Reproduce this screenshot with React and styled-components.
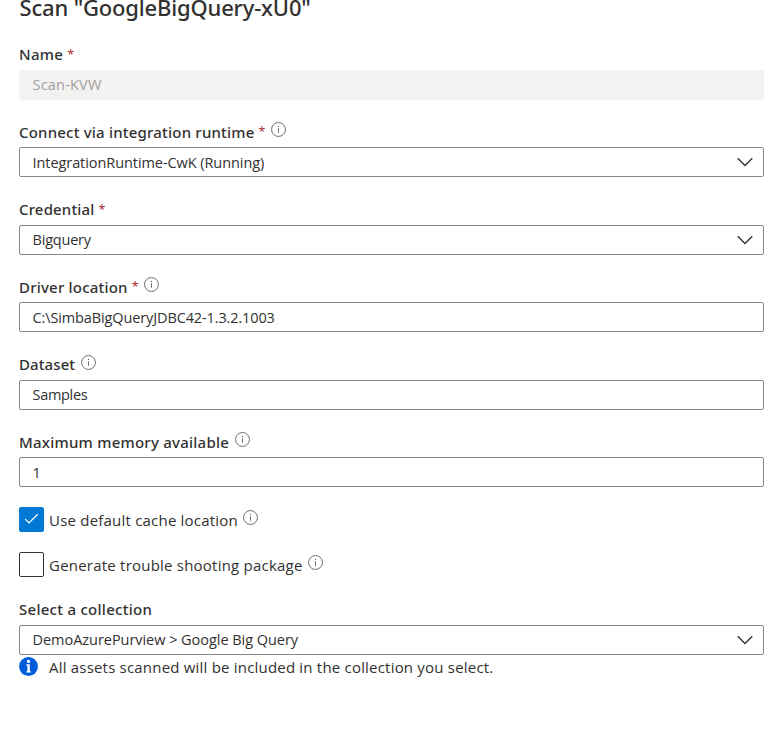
import React from 'react';
import styled, { createGlobalStyle } from 'styled-components';

const GlobalStyle = createGlobalStyle`
  *, *::before, *::after { box-sizing: border-box; }
  body { margin: 0; background: #fff; }
`;

const Panel = styled.main`
  height: 732px;
  padding: 0 19px;
  background: #fff;
  color: #323130;
  font-family: 'Open Sans', 'Noto Sans', sans-serif;
`;

const Title = styled.h1`
  height: 45px;
  margin: 0;
  padding-left: 0.5px;
  font: 500 22px/14px 'Noto Sans', sans-serif;
  letter-spacing: -0.17px;
  white-space: nowrap;
`;

const Fields = styled.div`
  display: flex;
  flex-direction: column;
  gap: 22.7px;
`;

const FieldBlock = styled.section`
  height: 54.8px;
`;

const LabelRow = styled.div`
  display: flex;
  height: 24.8px;
  white-space: nowrap;
`;

const LabelText = styled.label`
  padding-top: 0.3px;
  font: 500 15px/18px 'Noto Sans', sans-serif;
  letter-spacing: ${({ $spacing }) => $spacing}px;
`;

const Required = styled.span`
  margin-left: 4px;
  padding-top: 1px;
  color: #a4262c;
  font: 400 12.5px/18px 'Open Sans', sans-serif;
`;

const InfoSvg = styled.svg`
  flex: none;
  width: 15px;
  height: 15px;
  margin: ${({ $top }) => $top}px 0 0 ${({ $left }) => $left}px;
`;

const Control = styled.div`
  display: flex;
  align-items: center;
  justify-content: space-between;
  height: 30px;
  padding: 0 10px 0 ${({ $disabled }) => ($disabled ? 13.5 : 12.5)}px;
  border: ${({ $disabled }) => ($disabled ? '0' : '1px solid #8a8886')};
  border-radius: 2px;
  background: ${({ $disabled }) => ($disabled ? '#f3f2f1' : '#fff')};
  color: ${({ $disabled }) => ($disabled ? '#a19f9d' : '#323130')};
`;

const Value = styled.span`
  padding-top: 1px;
  font-size: 14.5px;
  line-height: 20px;
  letter-spacing: ${({ $spacing }) => $spacing}px;
  white-space: nowrap;
`;

const CheckRow = styled.div`
  display: flex;
  height: 45px;
`;

const CheckBox = styled.span`
  display: grid;
  place-items: center;
  width: 25px;
  height: 25px;
  border: 1px solid ${({ $checked }) => ($checked ? '#0078d4' : '#323130')};
  border-radius: 2px;
  background: ${({ $checked }) => ($checked ? '#0078d4' : '#fff')};
`;

const BodyText = styled.span`
  margin-left: ${({ $left }) => $left}px;
  font-size: 15px;
  line-height: ${({ $line }) => $line}px;
  letter-spacing: ${({ $spacing }) => $spacing}px;
  white-space: nowrap;
`;

const Checks = styled.section`
  padding-top: 19.7px;
`;

const Collection = styled.section`
  padding-top: 3.2px;
`;

const Note = styled.div`
  display: flex;
  padding-top: 2px;
  height: 30px;
`;

const Info = ({ left = 6, top = 0 }) => (
  <InfoSvg $left={left} $top={top} viewBox="0 0 15 15" fill="none" aria-hidden="true">
    <circle cx="7.5" cy="7.5" r="6.95" stroke="#605e5c" strokeWidth="0.9" />
    <path d="M7.5 6.2v4.6" stroke="#605e5c" strokeWidth="0.9" />
    <circle cx="7.5" cy="4.4" r="0.6" fill="#605e5c" />
  </InfoSvg>
);

const Chevron = () => (
  <svg width="16" height="10" viewBox="0 0 16 10" fill="none" aria-hidden="true">
    <path d="M0.7 1.2 8 8.5 15.3 1.2" stroke="#323130" strokeWidth="1.3" />
  </svg>
);

const CheckMark = () => (
  <svg width="15" height="12" viewBox="0 0 15 12" fill="none" aria-hidden="true">
    <path d="M1.2 6.1 5 9.9 13.7 1.2" stroke="#fff" strokeWidth="1.3" />
  </svg>
);

const InfoBadge = () => (
  <svg width="19" height="19" viewBox="0 0 19 19" aria-hidden="true">
    <circle cx="9.5" cy="9.5" r="9.4" fill="#015cda" />
    <circle cx="9.5" cy="4.4" r="1.6" fill="#fff" />
    <path d="M7.3 7.3h3.5v7h1.1v1.3H7.3v-1.3h1.1V8.6H7.3z" fill="#fff" />
  </svg>
);

const Label = ({ text, spacing, required, info, infoLeft }) => (
  <LabelRow>
    <LabelText $spacing={spacing}>{text}</LabelText>
    {required && <Required>*</Required>}
    {info && <Info left={infoLeft} />}
  </LabelRow>
);

const fields = [
  { text: 'Name', spacing: 0.3, required: true, value: 'Scan-KVW', valueSpacing: 0.2, disabled: true },
  { text: 'Connect via integration runtime', spacing: 0.2, required: true, info: true, value: 'IntegrationRuntime-CwK (Running)', valueSpacing: -0.07, select: true },
  { text: 'Credential', spacing: 0.15, required: true, value: 'Bigquery', valueSpacing: -0.2, select: true },
  { text: 'Driver location', spacing: 0.2, required: true, info: true, infoLeft: 5.3, value: 'C:\\SimbaBigQueryJDBC42-1.3.2.1003', valueSpacing: -0.12 },
  { text: 'Dataset', spacing: 0.1, info: true, infoLeft: 5.5, value: 'Samples', valueSpacing: -0.3 },
  { text: 'Maximum memory available', spacing: 0.24, info: true, infoLeft: 5.5, value: '1', valueSpacing: 0 },
];

export default function App() {
  return (
    <>
      <GlobalStyle />
      <Panel>
        <Title>Scan "GoogleBigQuery-xU0"</Title>
        <Fields>
          {fields.map((f) => (
            <FieldBlock key={f.text}>
              <Label {...f} />
              <Control $disabled={f.disabled}>
                <Value $spacing={f.valueSpacing}>{f.value}</Value>
                {f.select && <Chevron />}
              </Control>
            </FieldBlock>
          ))}
        </Fields>
        <Checks>
          <CheckRow>
            <CheckBox $checked><CheckMark /></CheckBox>
            <BodyText $left={5} $line={26} $spacing={0.21}>Use default cache location</BodyText>
            <Info left={5} top={3.5} />
          </CheckRow>
          <CheckRow>
            <CheckBox />
            <BodyText $left={5} $line={26} $spacing={0.22}>Generate trouble shooting package</BodyText>
            <Info left={5.5} top={3.5} />
          </CheckRow>
        </Checks>
        <Collection>
          <Label text="Select a collection" spacing={0.27} />
          <Control>
            <Value $spacing={-0.04}>DemoAzurePurview &gt; Google Big Query</Value>
            <Chevron />
          </Control>
          <Note>
            <InfoBadge />
            <BodyText $left={11} $line={21} $spacing={0.2}>All assets scanned will be included in the collection you select.</BodyText>
          </Note>
        </Collection>
      </Panel>
    </>
  );
}
